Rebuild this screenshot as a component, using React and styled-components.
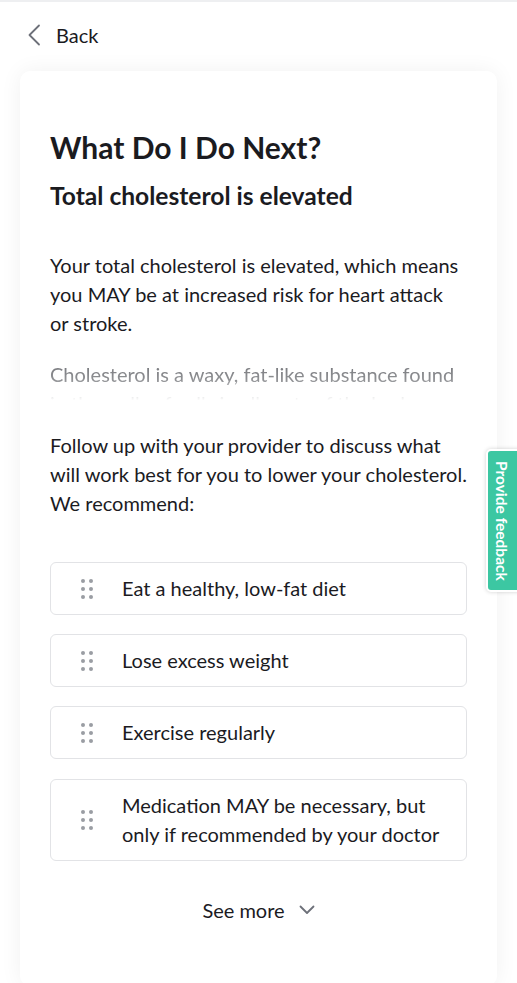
import React from 'react';
import styled, { createGlobalStyle } from 'styled-components';

const GlobalStyle = createGlobalStyle`
  * { box-sizing: border-box; }
  body {
    margin: 0;
    background: #ffffff;
    font-family: Lato, "Open Sans", sans-serif;
    color: #1b1b1f;
  }
`;

const Page = styled.div`
  min-height: 983px;
  border-top: 2px solid #eeeff1;
  overflow: hidden;
  position: relative;
`;

const BackLink = styled.a`
  display: flex;
  align-items: center;
  gap: 14px;
  padding: 17px 0 0 26px;
  height: 48px;
  font-size: 20px;
  color: #1b1b1f;
  text-decoration: none;
  cursor: pointer;
`;

const Card = styled.div`
  margin: 21px 20px 0;
  padding: 58px 30px 60px;
  background: #fff;
  border-radius: 10px;
  box-shadow: 0 0 22px rgba(0, 0, 0, 0.06);
`;

const Title = styled.h1`
  margin: 0;
  font-size: 30px;
  line-height: 36px;
  font-weight: 700;
`;

const Subtitle = styled.h2`
  margin: 15px 0 0;
  font-size: 24.6px;
  line-height: 31px;
  font-weight: 700;
`;

const Text = styled.p`
  margin: ${p => p.$top || 0}px 0 0;
  max-width: ${p => p.$max || 'none'};
  font-size: 20px;
  line-height: 29px;
`;

const Faded = styled.p`
  margin: 22px 0 0;
  font-size: 20px;
  line-height: 29px;
  height: 40px;
  overflow: hidden;
  color: #55575c;
  -webkit-mask-image: linear-gradient(to bottom, rgba(0,0,0,0.85) 0%, rgba(0,0,0,0.65) 50%, rgba(0,0,0,0.02) 100%);
  mask-image: linear-gradient(to bottom, rgba(0,0,0,0.85) 0%, rgba(0,0,0,0.65) 50%, rgba(0,0,0,0.02) 100%);
`;

const List = styled.ul`
  list-style: none;
  margin: 44px 0 0;
  padding: 0;
  display: flex;
  flex-direction: column;
  gap: 19.2px;
`;

const Item = styled.li`
  display: flex;
  align-items: center;
  gap: 28px;
  padding: 11px 20px 11px 29px;
  border: 1px solid #e2e3e6;
  border-radius: 6px;
  font-size: 20px;
  line-height: 29px;
`;

const Handle = styled.span`
  flex: none;
  display: grid;
  grid-template-columns: repeat(2, 4px);
  grid-auto-rows: 4px;
  column-gap: 4px;
  row-gap: 4px;
  width: 14px;
  padding-left: 1px;
  span {
    width: 4px;
    height: 4px;
    border-radius: 50%;
    background: #9a9da3;
  }
`;

const SeeMore = styled.button`
  display: flex;
  align-items: center;
  gap: 14px;
  margin: 34px auto 0;
  border: 0;
  background: none;
  font-family: inherit;
  font-size: 20px;
  line-height: 29px;
  color: #1b1b1f;
  cursor: pointer;
`;

const FeedbackTab = styled.div`
  position: absolute;
  top: 447px;
  right: -4px;
  width: 35px;
  height: 143px;
  display: flex;
  align-items: center;
  justify-content: center;
  background: #3cc7a2;
  border: 2px solid #fff;
  border-radius: 5px 0 0 5px;
  box-shadow: 0 0 4px rgba(0, 0, 0, 0.18);
  color: #fff;
  font-size: 15.5px;
  font-weight: 700;
  writing-mode: vertical-rl;
  white-space: nowrap;
  padding-right: 3px;
`;

const items = [
  'Eat a healthy, low-fat diet',
  'Lose excess weight',
  'Exercise regularly',
  'Medication MAY be necessary, but only if recommended by your doctor'
];

const Dots = () => (
  <Handle>
    {[0, 1, 2, 3, 4, 5].map(i => <span key={i} />)}
  </Handle>
);

export default function App() {
  return (
    <Page>
      <GlobalStyle />
      <BackLink>
        <svg width="16" height="22" viewBox="0 0 16 22" fill="none">
          <path d="M13 1.5 3.5 11 13 20.5" stroke="#6d7079" strokeWidth="1.8" strokeLinecap="round" strokeLinejoin="round" />
        </svg>
        Back
      </BackLink>
      <Card>
        <Title>What Do I Do Next?</Title>
        <Subtitle>Total cholesterol is elevated</Subtitle>
        <Text $top={40} $max="412px">
          Your total cholesterol is elevated, which means you MAY be at increased risk for heart attack or stroke.
        </Text>
        <Faded>
          Cholesterol is a waxy, fat-like substance found in the walls of cells in all parts of the body.
        </Faded>
        <Text $top={31}>
          Follow up with your provider to discuss what will work best for you to lower your cholesterol. We recommend:
        </Text>
        <List>
          {items.map(t => (
            <Item key={t}>
              <Dots />
              <span>{t}</span>
            </Item>
          ))}
        </List>
        <SeeMore>
          See more
          <svg width="16" height="10" viewBox="0 0 16 10" fill="none">
            <path d="M1.5 1.5 8 8l6.5-6.5" stroke="#6d7079" strokeWidth="1.8" strokeLinecap="round" strokeLinejoin="round" />
          </svg>
        </SeeMore>
      </Card>
      <FeedbackTab>Provide feedback</FeedbackTab>
    </Page>
  );
}
